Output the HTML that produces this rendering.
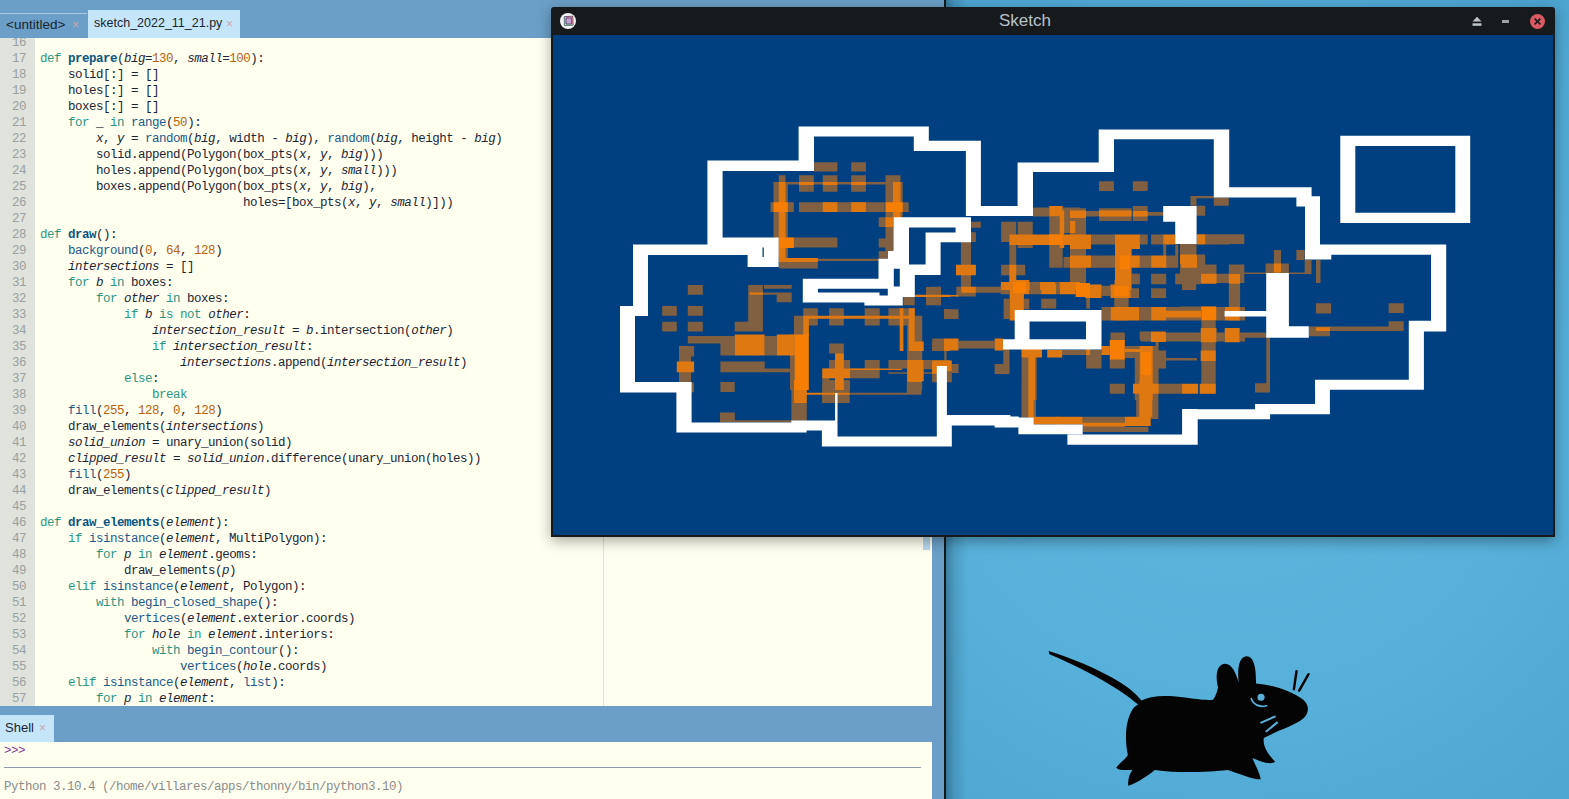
<!DOCTYPE html>
<html><head><meta charset="utf-8">
<style>
*{margin:0;padding:0;box-sizing:border-box}
html,body{width:1569px;height:799px;overflow:hidden;background:#5aafd5}
body{position:relative;font-family:"Liberation Sans",sans-serif}
#desk{position:absolute;left:946px;top:0;width:623px;height:799px;background:radial-gradient(ellipse 620px 560px at 280px 430px,#5db6de 0%,#57b0d9 50%,#4ba3cf 100%)}
#ide{position:absolute;left:0;top:0;width:944px;height:799px;background:#6b9fc7}
#vline{position:absolute;left:944px;top:0;width:2px;height:799px;background:#141819}
.tabbar{position:absolute;left:0;top:0;width:944px;height:38px}
.tab{position:absolute;font-size:13px;color:#1a2530;white-space:nowrap}
.x{color:#c9a5ad;font-size:12px;position:absolute}
#editor{position:absolute;left:0;top:38px;width:932px;height:668px;background:#fffff0;overflow:hidden}
#gutter{position:absolute;left:0;top:0;width:35px;height:668px;background:#dfe3dc}
.code{position:absolute;left:0;top:1.5px;font-family:"Liberation Mono",monospace;font-size:12.5px;letter-spacing:-0.5px;line-height:16px;white-space:pre}
.ln{position:absolute;left:0;width:26px;text-align:right;color:#9a9fa0}
.cl{position:absolute;left:40px;color:#1b2535}
.k{color:#2a9582}.f{color:#0a5582;font-weight:bold}.b{color:#1b5a8a}.n{color:#b8620c}.i{font-style:italic}
#margin{position:absolute;left:603px;top:0;width:1px;height:668px;background:#e2e2d8}
#shell{position:absolute;left:0;top:742px;width:932px;height:57px;background:#fffff0}
#win{position:absolute;left:551px;top:7px;width:1004px;height:530px;background:#171a1c;border-radius:3px 3px 0 0;box-shadow:0 4px 14px rgba(0,0,0,0.35)}
#canvas{position:absolute;left:2px;top:28px;width:1000px;height:500px;background:#004080;overflow:hidden}
</style></head><body>
<div id="desk"></div>
<svg id="mouse" style="position:absolute;left:0;top:0" width="1569" height="799" viewBox="0 0 1569 799">
<g transform="translate(1040,640) scale(0.18779)">
<path fill="#040404" d="M46,58 C150,92 310,150 430,228 C485,262 518,296 540,322 C600,292 680,295 760,305 C830,314 880,322 922,318 C938,296 944,272 948,252 C932,190 942,128 985,126 C1022,126 1044,176 1058,226 C1050,160 1058,86 1100,86 C1142,86 1152,160 1150,232 C1250,240 1335,272 1402,318 C1438,350 1432,392 1400,420 C1345,462 1265,482 1192,522 C1185,560 1210,605 1252,648 C1225,668 1172,645 1132,628 C1142,662 1168,700 1176,742 C1130,742 1060,712 1000,692 C900,702 750,712 612,692 C572,722 522,760 470,776 C466,742 478,712 492,692 C458,692 420,696 406,680 C418,660 448,642 468,612 C452,540 452,442 488,378 C498,360 512,350 522,344 C470,296 310,185 50,76 Z"/>
<circle cx="1177" cy="305" r="19" fill="#5ab0d8"/>
<path d="M1125,312 C1135,344 1170,360 1206,350" stroke="#5ab0d8" stroke-width="9" fill="none" stroke-linecap="round"/>
<path d="M1178,440 L1250,408" stroke="#5ab0d8" stroke-width="11" stroke-linecap="round"/>
<path d="M1206,486 L1262,440" stroke="#5ab0d8" stroke-width="11" stroke-linecap="round"/>
<path d="M1366,166 L1352,262" stroke="#040404" stroke-width="13" stroke-linecap="round"/>
<path d="M1430,182 L1380,270" stroke="#040404" stroke-width="13" stroke-linecap="round"/>
</g></svg>
<div id="ide">
  <div class="tabbar">
    <div style="position:absolute;left:0;top:13px;width:87px;height:1px;background:#a9cbe4"></div>
    <div class="tab" style="left:6px;top:17px;font-size:13.5px">&lt;untitled&gt;</div><div class="x" style="left:72px;top:18px">×</div>
    <div style="position:absolute;left:88px;top:10px;width:152px;height:28px;background:#c5e5f9"></div>
    <div class="tab" style="left:94px;top:16px;font-size:12.5px">sketch_2022_11_21.py</div><div class="x" style="left:226px;top:17px">×</div>
  </div>
  <div id="editor">
    <div id="gutter"></div>
    <div id="margin"></div>
    <div class="code" id="codebox">
<div class="ln" style="top:-5px">16</div><div class="cl" style="top:-5px"></div>
<div class="ln" style="top:11px">17</div><div class="cl" style="top:11px"><span class="k">def</span> <span class="f">prepare</span>(<span class="i">big</span>=<span class="n">130</span>, <span class="i">small</span>=<span class="n">100</span>):</div>
<div class="ln" style="top:27px">18</div><div class="cl" style="top:27px">    solid[:] = []</div>
<div class="ln" style="top:43px">19</div><div class="cl" style="top:43px">    holes[:] = []</div>
<div class="ln" style="top:59px">20</div><div class="cl" style="top:59px">    boxes[:] = []</div>
<div class="ln" style="top:75px">21</div><div class="cl" style="top:75px">    <span class="k">for</span> _ <span class="k">in</span> <span class="b">range</span>(<span class="n">50</span>):</div>
<div class="ln" style="top:91px">22</div><div class="cl" style="top:91px">        <span class="i">x</span>, <span class="i">y</span> = <span class="b">random</span>(<span class="i">big</span>, width - <span class="i">big</span>), <span class="b">random</span>(<span class="i">big</span>, height - <span class="i">big</span>)</div>
<div class="ln" style="top:107px">23</div><div class="cl" style="top:107px">        solid.append(Polygon(box_pts(<span class="i">x</span>, <span class="i">y</span>, <span class="i">big</span>)))</div>
<div class="ln" style="top:123px">24</div><div class="cl" style="top:123px">        holes.append(Polygon(box_pts(<span class="i">x</span>, <span class="i">y</span>, <span class="i">small</span>)))</div>
<div class="ln" style="top:139px">25</div><div class="cl" style="top:139px">        boxes.append(Polygon(box_pts(<span class="i">x</span>, <span class="i">y</span>, <span class="i">big</span>),</div>
<div class="ln" style="top:155px">26</div><div class="cl" style="top:155px">                             holes=[box_pts(<span class="i">x</span>, <span class="i">y</span>, <span class="i">small</span>)]))</div>
<div class="ln" style="top:171px">27</div><div class="cl" style="top:171px"></div>
<div class="ln" style="top:187px">28</div><div class="cl" style="top:187px"><span class="k">def</span> <span class="f">draw</span>():</div>
<div class="ln" style="top:203px">29</div><div class="cl" style="top:203px">    <span class="b">background</span>(<span class="n">0</span>, <span class="n">64</span>, <span class="n">128</span>)</div>
<div class="ln" style="top:219px">30</div><div class="cl" style="top:219px">    <span class="i">intersections</span> = []</div>
<div class="ln" style="top:235px">31</div><div class="cl" style="top:235px">    <span class="k">for</span> <span class="i">b</span> <span class="k">in</span> boxes:</div>
<div class="ln" style="top:251px">32</div><div class="cl" style="top:251px">        <span class="k">for</span> <span class="i">other</span> <span class="k">in</span> boxes:</div>
<div class="ln" style="top:267px">33</div><div class="cl" style="top:267px">            <span class="k">if</span> <span class="i">b</span> <span class="k">is</span> <span class="k">not</span> <span class="i">other</span>:</div>
<div class="ln" style="top:283px">34</div><div class="cl" style="top:283px">                <span class="i">intersection_result</span> = <span class="i">b</span>.intersection(<span class="i">other</span>)</div>
<div class="ln" style="top:299px">35</div><div class="cl" style="top:299px">                <span class="k">if</span> <span class="i">intersection_result</span>:</div>
<div class="ln" style="top:315px">36</div><div class="cl" style="top:315px">                    <span class="i">intersections</span>.append(<span class="i">intersection_result</span>)</div>
<div class="ln" style="top:331px">37</div><div class="cl" style="top:331px">            <span class="k">else</span>:</div>
<div class="ln" style="top:347px">38</div><div class="cl" style="top:347px">                <span class="k">break</span></div>
<div class="ln" style="top:363px">39</div><div class="cl" style="top:363px">    <span class="b">fill</span>(<span class="n">255</span>, <span class="n">128</span>, <span class="n">0</span>, <span class="n">128</span>)</div>
<div class="ln" style="top:379px">40</div><div class="cl" style="top:379px">    draw_elements(<span class="i">intersections</span>)</div>
<div class="ln" style="top:395px">41</div><div class="cl" style="top:395px">    <span class="i">solid_union</span> = unary_union(solid)</div>
<div class="ln" style="top:411px">42</div><div class="cl" style="top:411px">    <span class="i">clipped_result</span> = <span class="i">solid_union</span>.difference(unary_union(holes))</div>
<div class="ln" style="top:427px">43</div><div class="cl" style="top:427px">    <span class="b">fill</span>(<span class="n">255</span>)</div>
<div class="ln" style="top:443px">44</div><div class="cl" style="top:443px">    draw_elements(<span class="i">clipped_result</span>)</div>
<div class="ln" style="top:459px">45</div><div class="cl" style="top:459px"></div>
<div class="ln" style="top:475px">46</div><div class="cl" style="top:475px"><span class="k">def</span> <span class="f">draw_elements</span>(<span class="i">element</span>):</div>
<div class="ln" style="top:491px">47</div><div class="cl" style="top:491px">    <span class="k">if</span> <span class="b">isinstance</span>(<span class="i">element</span>, MultiPolygon):</div>
<div class="ln" style="top:507px">48</div><div class="cl" style="top:507px">        <span class="k">for</span> <span class="i">p</span> <span class="k">in</span> <span class="i">element</span>.geoms:</div>
<div class="ln" style="top:523px">49</div><div class="cl" style="top:523px">            draw_elements(<span class="i">p</span>)</div>
<div class="ln" style="top:539px">50</div><div class="cl" style="top:539px">    <span class="k">elif</span> <span class="b">isinstance</span>(<span class="i">element</span>, Polygon):</div>
<div class="ln" style="top:555px">51</div><div class="cl" style="top:555px">        <span class="k">with</span> <span class="b">begin_closed_shape</span>():</div>
<div class="ln" style="top:571px">52</div><div class="cl" style="top:571px">            <span class="b">vertices</span>(<span class="i">element</span>.exterior.coords)</div>
<div class="ln" style="top:587px">53</div><div class="cl" style="top:587px">            <span class="k">for</span> <span class="i">hole</span> <span class="k">in</span> <span class="i">element</span>.interiors:</div>
<div class="ln" style="top:603px">54</div><div class="cl" style="top:603px">                <span class="k">with</span> <span class="b">begin_contour</span>():</div>
<div class="ln" style="top:619px">55</div><div class="cl" style="top:619px">                    <span class="b">vertices</span>(<span class="i">hole</span>.coords)</div>
<div class="ln" style="top:635px">56</div><div class="cl" style="top:635px">    <span class="k">elif</span> <span class="b">isinstance</span>(<span class="i">element</span>, <span class="b">list</span>):</div>
<div class="ln" style="top:651px">57</div><div class="cl" style="top:651px">        <span class="k">for</span> <span class="i">p</span> <span class="k">in</span> <span class="i">element</span>:</div>
<div class="ln" style="top:667px">58</div><div class="cl" style="top:667px">            draw_elements(<span class="i">p</span>)</div>
</div>
  </div>
  <div style="position:absolute;left:923px;top:300px;width:7px;height:250px;background:#b7d7ee"></div>
  <div style="position:absolute;left:0;top:715px;width:54px;height:27px;background:#c5e5f9"></div>
  <div class="tab" style="left:5px;top:720px">Shell</div><div class="x" style="left:39px;top:721px">×</div>
  <div id="shell">
    <div style="position:absolute;left:4px;top:1px;font-family:'Liberation Mono',monospace;font-size:12.5px;letter-spacing:-0.5px;line-height:16px;color:#7b3a9c">&gt;&gt;&gt;</div>
    <div style="position:absolute;left:4px;top:25px;width:917px;height:1px;background:#8d9cab"></div>
    <div style="position:absolute;left:4px;top:37px;font-family:'Liberation Mono',monospace;font-size:12.5px;letter-spacing:-0.5px;line-height:16px;color:#8a8c8c">Python 3.10.4 (/home/villares/apps/thonny/bin/python3.10)</div>
  </div>
</div>
<div id="vline"></div><div style="position:absolute;left:946px;top:0;width:22px;height:799px;background:linear-gradient(to right,rgba(0,20,40,0.32),rgba(0,20,40,0.12) 40%,rgba(0,20,40,0))"></div>
<div id="win">
  <div style="position:absolute;left:9px;top:6px;width:16px;height:16px;border-radius:50%;background:#f4f4f4"></div>
  <svg style="position:absolute;left:11px;top:7px" width="13" height="13" viewBox="0 0 13 13"><path d="M2.2 2.6L10.8 2.2 9.5 4H4Z" fill="#e27fcf"/><path d="M2.2 2.6L4 4V10L2.4 11.6Z" fill="#8ec9ee"/><path d="M10.8 2.2L9.5 4V10L11.2 11.2Z" fill="#f28aa2"/><path d="M4 10H9.5L11.2 11.2 2.4 11.6Z" fill="#93d6cf"/><rect x="4" y="4" width="5.5" height="6" fill="#c3a0d8"/><path d="M2.2 2.6L10.8 2.2 11.2 11.2 2.4 11.6Z M4 4H9.5V10H4Z" fill="none" stroke="#2a2a2a" stroke-width="0.6"/></svg>
  <div style="position:absolute;left:448px;top:0;height:28px;font-size:17px;line-height:28px;color:#b9c1c8">Sketch</div>
  <svg style="position:absolute;left:919px;top:9px" width="14" height="12" viewBox="0 0 14 12"><path d="M7 0.8L11.5 5.6H2.5Z" fill="#bcc6c6"/><rect x="2.5" y="7.3" width="9" height="2.5" fill="#bcc6c6"/></svg>
  <div style="position:absolute;left:951px;top:13px;width:7px;height:2.5px;background:#9aa2a4"></div>
  <div style="position:absolute;left:979px;top:7px;width:15px;height:15px;border-radius:50%;background:#d75a62"></div>
  <svg style="position:absolute;left:979px;top:7px" width="15" height="15" viewBox="0 0 15 15"><path d="M4.6 4.6L10.4 10.4M10.4 4.6L4.6 10.4" stroke="#1a1a1a" stroke-width="1.6"/></svg>
  <div id="canvas"><svg width="1000" height="500" style="position:absolute;left:0;top:0"><path fill="rgb(128,96,64)" d="M261.1 127.2H284.4V136.5H261.1ZM298.2 127.2H312.9V136.5H298.2ZM246.0 140.3H260.8V156.8H246.0ZM269.8 140.3H284.4V156.8H269.8ZM298.2 140.3H312.9V156.8H298.2ZM332.5 140.3H347.5V156.8H332.5ZM246.0 167.3H331.7V177.1H246.0ZM220.5 147.0H234.8V223.7H220.5ZM225.8 140.3H232.5V147.0H225.8ZM217.5 167.3H240.8V177.1H217.5ZM225.8 202.6H240.8V213.1H225.8ZM332.5 147.0H349.7V216.2H332.5ZM325.7 182.3H336.2V192.1H325.7ZM325.7 203.4H336.2V212.4H325.7ZM325.7 216.2H335.5V223.7H325.7ZM349.7 167.3H355.7V177.1H349.7ZM225.8 222.9H264.8V233.4H225.8ZM264.8 223.7H325.7V226.0H264.8ZM240.8 202.6H284.4V212.4H240.8ZM234.8 147.0H334.7V149.5H234.8ZM134.8 250.0H149.8V259.8H134.8ZM109.2 271.0H123.8V280.8H109.2ZM134.8 271.0H149.8V280.8H134.8ZM109.2 286.8H123.8V296.6H109.2ZM134.8 286.8H149.8V296.6H134.8ZM195.2 250.0H209.9V296.6H195.2ZM181.7 286.8H195.2V296.6H181.7ZM211.0 250.0H238.7V253.8H211.0ZM195.2 257.5H238.7V259.8H195.2ZM223.7 257.5H238.7V267.3H223.7ZM134.8 301.1H181.7V308.6H134.8ZM167.4 308.6H181.7V320.6H167.4ZM211.7 301.1H223.7V320.6H211.7ZM241.0 280.8H247.0V299.6H241.0ZM126.0 310.9H141.1V321.4H126.0ZM126.0 321.4H138.1V347.0H126.0ZM167.4 326.6H211.7V337.2H167.4ZM211.7 333.4H238.7V337.2H211.7ZM167.4 347.0H181.7V357.0H167.4ZM238.0 320.6H241.7V343.2H238.0ZM250.2 273.3H264.8V290.6H250.2ZM276.1 273.3H290.8V290.6H276.1ZM311.7 273.3H326.7V290.6H311.7ZM335.4 273.3H361.7V290.6H335.4ZM241.5 280.8H255.8V301.1H241.5ZM237.0 299.6H241.5V355.0H237.0ZM354.2 280.8H369.2V316.1H354.2ZM373.0 252.3H388.0V270.3H373.0ZM391.0 274.0H397.0V283.8H391.0ZM379.0 306.4H397.0V316.1H379.0ZM350.4 262.0H361.7V270.3H350.4ZM276.1 308.6H290.8V318.4H276.1ZM282.0 318.4H290.8V325.1H282.0ZM276.1 325.1H297.1V343.2H276.1ZM269.3 333.4H276.1V346.2H269.3ZM297.1 333.4H326.7V343.2H297.1ZM311.7 325.1H326.7V333.4H311.7ZM335.4 325.1H354.2V333.4H335.4ZM335.4 337.2H397.0V338.7H335.4ZM354.2 316.1H369.2V355.0H354.2ZM370.7 325.1H397.0V334.2H370.7ZM379.0 338.7H387.2V346.2H379.0ZM269.3 346.2H297.1V355.0H269.3ZM167.0 377.6H181.8V387.3H167.0ZM181.8 385.3H238.4V387.6H181.8ZM238.4 345.0H247.0V385.8H238.4ZM138.0 347.5H141.0V357.2H138.0ZM238.5 368.0H253.8V385.8H238.5ZM269.1 350.1H296.7V368.0H269.1ZM296.7 357.7H368.6V359.8H296.7ZM353.8 345.0H368.6V359.8H353.8ZM276.0 345.0H296.7V347.0H276.0ZM418.0 186.8H427.8V192.8H418.0ZM418.0 197.3H422.9V207.1H418.0ZM407.9 207.1H418.0V255.0H407.9ZM373.0 252.0H388.0V255.0H373.0ZM448.1 186.8H463.2V207.1H448.1ZM464.7 186.8H479.7V213.1H464.7ZM479.7 172.6H496.2V181.6H479.7ZM509.7 172.6H527.0V181.6H509.7ZM496.2 181.6H509.7V232.7H496.2ZM510.5 181.6H518.0V198.1H510.5ZM518.0 183.0H527.0V255.0H518.0ZM456.4 199.6H463.2V255.0H456.4ZM464.7 207.1H472.2V213.1H464.7ZM448.1 229.7H472.2V240.2H448.1ZM510.5 222.1H518.0V232.7H510.5ZM472.2 247.0H518.0V255.0H472.2ZM546.0 146.3H560.9V156.0H546.0ZM579.8 146.3H594.7V156.0H579.8ZM517.0 173.3H533.0V186.0H517.0ZM533.0 176.0H546.0V181.6H533.0ZM546.0 173.3H578.6V186.0H546.0ZM579.8 171.0H594.7V186.0H579.8ZM594.7 177.0H610.2V180.8H594.7ZM643.2 171.0H652.2V180.8H643.2ZM517.0 186.0H533.0V255.0H517.0ZM538.0 199.6H562.0V209.4H538.0ZM586.9 199.6H594.7V209.4H586.9ZM598.1 199.6H610.2V209.4H598.1ZM652.2 199.6H677.0V209.4H652.2ZM538.0 220.6H562.0V232.7H538.0ZM586.9 220.6H598.1V232.7H586.9ZM613.2 220.6H622.2V232.7H613.2ZM644.0 220.6H652.2V232.7H644.0ZM629.0 209.4H643.2V255.0H629.0ZM610.2 209.4H613.2V232.7H610.2ZM622.2 209.4H625.2V232.7H622.2ZM647.7 229.7H663.5V247.7H647.7ZM663.5 238.7H677.0V247.7H663.5ZM598.1 238.7H613.2V249.2H598.1ZM578.6 238.7H586.9V249.2H578.6ZM622.2 238.7H647.7V249.2H622.2ZM538.0 250.7H562.0V255.0H538.0ZM637.5 161.0H643.5V170.8H637.5ZM643.5 161.0H660.8V163.3H643.5ZM660.8 162.5H675.8V170.8H660.8ZM643.5 170.8H651.8V180.5H643.5ZM651.8 199.3H691.3V209.0H651.8ZM627.0 209.0H643.5V219.6H627.0ZM643.5 219.6H651.8V229.4H643.5ZM627.0 229.4H663.0V239.1H627.0ZM675.8 229.4H691.3V239.1H675.8ZM691.3 237.6H758.5V239.1H691.3ZM627.0 239.1H648.0V248.1H627.0ZM663.0 239.1H675.8V248.1H663.0ZM687.1 239.1H691.3V248.1H687.1ZM675.8 248.1H687.1V275.0H675.8ZM720.9 215.0H728.0V228.6H720.9ZM712.6 228.6H735.9V237.6H712.6ZM743.4 215.0H751.7V224.9H743.4ZM751.7 224.9H758.5V239.1H751.7ZM763.0 224.9H767.5V248.1H763.0ZM763.0 268.4H778.0V278.4H763.0ZM627.0 271.4H663.0V275.0H627.0ZM377.0 251.8H387.5V269.8H377.0ZM403.3 251.8H422.8V261.5H403.3ZM408.5 245.0H417.6V251.8H408.5ZM422.8 251.8H447.6V257.8H422.8ZM447.6 248.8H456.6V259.3H447.6ZM476.2 248.8H488.2V259.3H476.2ZM503.2 248.8H507.0V259.3H503.2ZM450.6 263.8H456.6V284.0H450.6ZM470.9 263.8H476.2V274.3H470.9ZM488.2 263.8H503.2V273.5H488.2ZM533.2 260.0H537.0V273.5H533.2ZM391.3 274.3H405.5V284.0H391.3ZM379.3 303.6H391.3V315.6H379.3ZM405.5 305.8H441.6V313.4H405.5ZM391.3 313.4H393.5V326.1H391.3ZM398.8 329.1H405.5V338.1H398.8ZM379.3 336.6H398.8V347.2H379.3ZM450.3 313.4H456.6V329.1H450.3ZM441.6 329.1H456.6V338.9H441.6ZM468.6 314.1H483.7V365.0H468.6ZM509.2 314.9H533.2V320.1H509.2ZM533.2 323.1H537.0V333.6H533.2ZM548.5 253.0H557.5V261.0H548.5ZM577.8 253.3H586.0V263.0H577.8ZM598.1 253.3H613.1V263.0H598.1ZM598.1 245.0H613.1V248.8H598.1ZM622.2 245.0H637.2V248.8H622.2ZM561.3 245.0H575.6V285.6H561.3ZM676.2 245.0H686.7V285.6H676.2ZM548.5 272.0H557.5V285.6H548.5ZM586.0 272.0H598.1V285.6H586.0ZM613.1 272.0H648.4V285.6H613.1ZM663.5 272.0H671.7V285.6H663.5ZM686.7 272.0H692.0V285.6H686.7ZM648.4 285.6H662.7V358.4H648.4ZM557.5 297.6H571.8V306.6H557.5ZM587.6 297.6H598.1V306.6H587.6ZM613.1 297.6H647.7V306.6H613.1ZM663.5 297.6H671.7V306.6H663.5ZM686.7 297.6H692.0V306.6H686.7ZM571.8 311.0H587.6V323.1H571.8ZM581.8 311.0H604.6V365.0H581.8ZM602.6 315.6H613.1V333.6H602.6ZM613.1 323.1H644.0V325.4H613.1ZM533.5 323.1H548.5V333.6H533.5ZM556.8 323.1H571.8V333.6H556.8ZM556.8 348.7H571.8V358.4H556.8ZM605.6 348.7H629.7V358.4H605.6ZM602.6 305.0H605.6V356.0H602.6ZM763.1 268.3H778.1V278.0H763.1ZM835.6 268.3H850.7V278.0H835.6ZM835.6 286.3H850.7V296.0H835.6ZM756.0 291.5H850.7V296.0H756.0ZM756.0 296.0H777.0V301.3H756.0ZM687.0 297.6H713.3V302.8H687.0ZM713.3 302.8H717.0V357.6H713.3ZM702.0 348.3H717.0V357.6H702.0ZM468.5 345.0H483.0V382.5H468.5ZM502.7 381.7H508.2V389.4H502.7ZM529.7 381.7H571.7V389.4H529.7ZM529.7 391.7H595.4V397.0H529.7ZM583.2 345.0H605.4V384.0H583.2ZM557.2 348.8H571.7V358.8H557.2ZM605.4 348.8H629.1V358.8H605.4ZM648.2 345.0H662.0V348.8H648.2ZM533.0 315.0H548.5V323.0H533.0ZM586.7 296.6H598.0V304.8H586.7Z"/><path fill="rgb(223,120,16)" d="M225.8 147.0H232.5V223.7H225.8ZM246.0 147.0H260.8V150.0H246.0ZM269.8 147.0H284.4V150.0H269.8ZM298.2 147.0H312.9V150.0H298.2ZM269.8 167.3H284.4V177.1H269.8ZM298.2 167.3H312.9V177.1H298.2ZM340.0 147.0H347.5V216.2H340.0ZM332.5 182.3H340.7V192.1H332.5ZM225.8 222.9H264.8V227.0H225.8ZM196.5 257.5H209.9V259.8H196.5ZM181.7 299.6H211.7V320.6H181.7ZM223.7 299.6H241.7V320.6H223.7ZM123.8 326.6H141.1V337.2H123.8ZM250.2 280.8H361.7V283.8H250.2ZM250.2 280.8H255.8V301.1H250.2ZM346.7 273.3H350.4V316.1H346.7ZM355.7 273.3H361.7V316.1H355.7ZM361.7 306.4H370.7V316.1H361.7ZM361.7 259.8H397.0V262.0H361.7ZM391.0 304.0H397.0V316.1H391.0ZM282.0 318.4H290.8V355.0H282.0ZM269.3 333.4H297.1V343.2H269.3ZM282.0 333.4H349.0V335.0H282.0ZM354.2 325.1H370.7V346.2H354.2ZM379.0 328.0H391.7V338.7H379.0ZM241.0 345.0H247.0V367.4H241.0ZM241.0 345.0H253.8V368.0H241.0ZM253.8 357.7H296.7V359.8H253.8ZM355.8 345.0H368.6V347.0H355.8ZM403.0 229.7H422.9V240.2H403.0ZM496.2 171.0H509.7V181.6H496.2ZM506.7 175.6H511.2V213.1H506.7ZM456.4 199.6H527.0V210.1H456.4ZM456.4 229.7H463.2V255.0H456.4ZM448.1 247.0H476.7V255.0H448.1ZM487.0 247.0H502.0V255.0H487.0ZM506.7 247.0H527.0V255.0H506.7ZM517.0 175.6H533.0V183.0H517.0ZM546.0 175.6H578.6V181.6H546.0ZM579.8 176.0H594.7V181.6H579.8ZM517.0 186.0H522.3V198.0H517.0ZM517.0 199.6H538.0V213.9H517.0ZM517.0 220.6H538.0V232.7H517.0ZM562.0 199.6H586.9V213.9H562.0ZM610.2 199.6H622.2V209.4H610.2ZM644.0 199.6H652.2V209.4H644.0ZM562.0 199.6H578.6V255.0H562.0ZM578.6 220.6H586.9V232.7H578.6ZM598.1 220.6H613.2V232.7H598.1ZM628.2 220.6H644.0V232.7H628.2ZM648.5 238.7H663.5V247.7H648.5ZM517.0 250.7H538.0V255.0H517.0ZM643.5 199.3H651.8V209.0H643.5ZM627.0 219.6H643.5V229.4H627.0ZM648.0 239.1H663.0V248.1H648.0ZM675.8 239.1H687.1V248.1H675.8ZM720.9 228.6H728.0V237.6H720.9ZM648.0 271.4H663.0V275.0H648.0ZM377.0 260.0H405.5V261.5H377.0ZM408.5 251.8H422.8V257.8H408.5ZM456.6 245.0H476.2V259.3H456.6ZM488.2 248.8H503.2V259.3H488.2ZM507.0 248.8H522.7V259.3H507.0ZM456.6 259.3H470.9V285.6H456.6ZM391.3 303.6H405.5V315.6H391.3ZM441.6 303.6H450.3V315.6H441.6ZM379.3 325.4H398.8V336.6H379.3ZM475.4 314.1H482.2V365.0H475.4ZM468.6 314.1H489.0V322.4H468.6ZM494.2 314.9H509.2V322.4H494.2ZM533.2 314.1H537.0V320.1H533.2ZM532.0 249.5H548.5V263.0H532.0ZM557.5 249.5H577.8V263.0H557.5ZM648.4 245.0H663.5V248.8H648.4ZM676.2 245.0H686.7V248.8H676.2ZM561.3 272.0H575.6V285.6H561.3ZM557.5 272.0H586.0V285.6H557.5ZM598.1 272.0H613.1V285.6H598.1ZM613.1 275.8H648.4V282.6H613.1ZM671.7 272.0H686.7V285.6H671.7ZM647.7 293.0H663.5V307.3H647.7ZM647.7 315.6H662.7V326.1H647.7ZM647.0 348.7H662.7V358.4H647.0ZM598.1 297.6H613.1V306.6H598.1ZM671.7 293.0H686.7V307.3H671.7ZM548.5 311.0H556.8V320.1H548.5ZM571.8 314.0H587.6V317.0H571.8ZM586.7 311.0H599.7V365.0H586.7ZM580.0 348.7H605.6V358.4H580.0ZM629.7 348.7H644.7V358.4H629.7ZM763.1 292.3H777.0V296.0H763.1ZM475.4 345.0H480.7V382.5H475.4ZM480.7 381.7H529.7V389.4H480.7ZM529.7 387.8H571.7V391.7H529.7ZM571.7 381.7H597.7V390.9H571.7ZM586.3 345.0H599.3V381.7H586.3ZM580.9 348.8H605.4V358.8H580.9ZM629.1 348.8H645.1V358.8H629.1ZM646.7 348.8H662.0V358.8H646.7ZM598.0 296.6H612.7V307.0H598.0Z"/><path fill="rgb(247,126,4)" d="M220.5 167.3H234.8V177.1H220.5ZM225.8 202.6H240.8V213.1H225.8ZM332.5 167.3H349.7V177.1H332.5ZM241.5 299.6H255.8V355.0H241.5ZM496.2 199.6H509.7V210.1H496.2ZM566.6 220.6H577.1V234.2H566.6ZM460.0 247.0H473.0V258.0H460.0ZM522.7 248.0H537.0V262.0H522.7ZM561.3 251.0H575.6V261.0H561.3ZM648.4 272.0H663.5V285.6H648.4ZM556.8 305.0H571.8V324.6H556.8ZM588.0 317.0H598.0V340.0H588.0ZM588.0 317.0H598.0V340.0H588.0Z"/><path fill="#fff" d="M245.6 91.4H375.8V101.4H245.6ZM245.6 91.4H261.0V136.0H245.6ZM154.4 125.6H261.0V136.0H154.4ZM154.4 125.6H169.6V220.0H154.4ZM154.4 202.4H225.6V220.0H154.4ZM80.0 209.4H225.6V220.0H80.0ZM194.6 202.4H225.6V232.0H194.6ZM80.0 209.4H95.0V281.0H80.0ZM67.0 271.0H95.0V281.0H67.0ZM67.0 271.0H82.0V357.4H67.0ZM67.0 347.0H138.6V357.4H67.0ZM123.4 347.0H138.6V397.4H123.4ZM123.4 387.6H253.6V397.5H123.4ZM238.3 385.4H284.2V395.5H238.3ZM268.9 385.4H284.2V411.6H268.9ZM268.9 401.6H398.8V411.6H268.9ZM282.1 358.0H284.5V401.6H282.1ZM340.8 182.2H418.0V192.5H340.8ZM402.6 182.2H418.0V207.2H402.6ZM372.6 197.5H418.0V207.2H372.6ZM372.6 197.5H387.6V240.0H372.6ZM340.8 182.2H356.0V229.4H340.8ZM335.0 216.0H340.8V223.8H335.0ZM325.5 223.8H340.8V243.8H325.5ZM340.8 229.4H387.6V240.0H340.8ZM325.5 240.0H361.8V261.9H325.5ZM249.8 243.8H325.5V267.5H249.8ZM311.4 261.9H349.8V270.6H311.4ZM360.8 91.4H375.8V116.1H360.8ZM360.8 105.7H427.9V116.1H360.8ZM412.9 105.7H427.9V180.9H412.9ZM412.9 170.9H480.0V180.9H412.9ZM464.6 127.4H480.0V180.9H464.6ZM464.6 127.4H561.0V137.0H464.6ZM545.7 94.4H561.0V137.0H545.7ZM545.7 94.4H676.2V104.2H545.7ZM660.8 94.4H676.2V162.6H660.8ZM660.8 152.3H758.6V162.6H660.8ZM743.4 152.3H758.6V171.4H743.4ZM752.0 161.2H767.0V224.6H752.0ZM752.0 209.6H893.2V219.8H752.0ZM752.0 214.0H778.3V224.6H752.0ZM878.0 209.6H893.2V296.5H878.0ZM855.8 285.8H893.2V296.5H855.8ZM855.8 285.8H870.9V354.8H855.8ZM762.0 344.8H870.9V354.8H762.0ZM762.1 344.8H776.9V379.2H762.1ZM702.0 369.0H776.9V379.2H702.0ZM702.0 369.0H717.1V384.2H702.0ZM629.1 374.2H717.1V384.2H629.1ZM629.1 374.0H644.7V409.7H629.1ZM514.4 399.4H644.7V409.7H514.4ZM787.3 100.8H917.2V110.9H787.3ZM787.3 177.8H917.2V187.9H787.3ZM787.3 100.8H802.3V187.9H787.3ZM902.3 100.8H917.2V187.9H902.3ZM610.2 171.0H643.6V186.7H610.2ZM622.2 186.7H643.6V209.0H622.2ZM713.2 238.0H735.9V302.8H713.2ZM713.2 291.2H755.8V302.8H713.2ZM671.6 276.0H713.2V281.4H671.6ZM461.7 275.0H548.5V286.4H461.7ZM461.7 275.0H476.5V314.4H461.7ZM533.0 275.0H548.5V314.4H533.0ZM450.0 304.2H548.5V314.4H450.0ZM383.8 331.0H393.9V401.6H383.8ZM393.9 380.0H398.8V411.6H393.9ZM393.9 380.0H457.4V390.4H393.9ZM441.6 381.4H465.7V392.6H441.6ZM465.4 389.4H529.7V399.3H465.4ZM457.0 382.5H480.7V392.4H457.0ZM514.4 399.4H644.7V409.7H514.4Z"/><path fill="#004080" d="M209.5 212.6H210.8V222.0H209.5ZM264.9 253.8H334.8V257.5H264.9ZM326.5 257.5H334.8V260.6H326.5ZM340.8 233.8H346.8V251.5H340.8Z"/></svg></div>
</div>
</body></html>
